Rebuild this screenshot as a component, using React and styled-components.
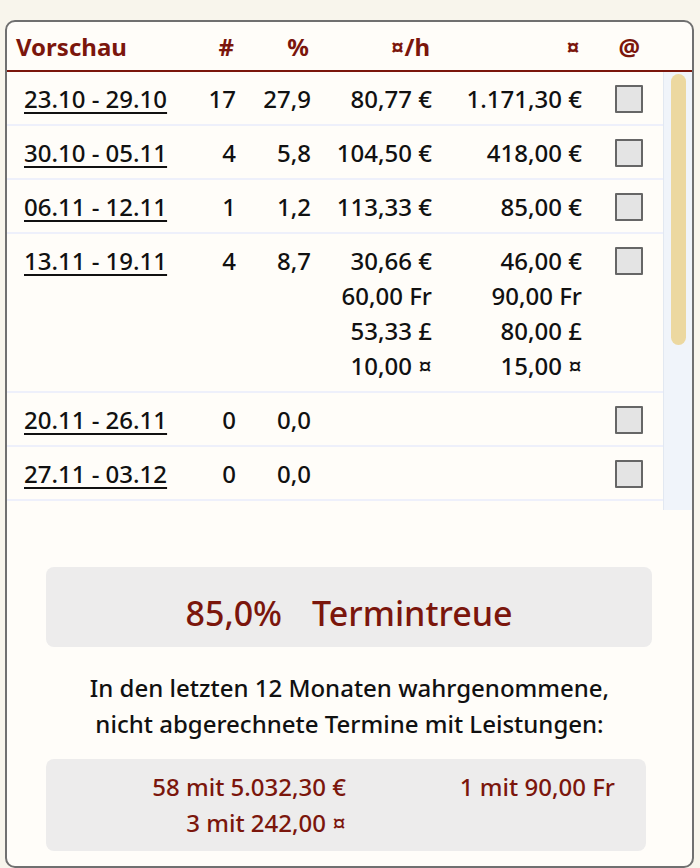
import React from 'react';
import styled, { createGlobalStyle } from 'styled-components';

const Global = createGlobalStyle`
  html, body { margin: 0; padding: 0; }
  body {
    background: #f8f5ec;
    font-family: "Noto Sans", "Open Sans", sans-serif;
    font-weight: 500;
    color: #111;
  }
`;

const RED = '#7b160c';

const Card = styled.div`
  margin: 20px 6px 0 5px;
  height: 848px;
  box-sizing: border-box;
  border: 2px solid #707070;
  border-radius: 10px;
  background: #fffdf9;
  overflow: hidden;
  display: flex;
  flex-direction: column;
`;

const cols = '164px 56px 75px 121px 150px 62px';

const HeaderRow = styled.div`
  display: grid;
  grid-template-columns: ${cols};
  align-items: center;
  height: 48px;
  padding-left: 9px;
  border-bottom: 2px solid ${RED};
  color: ${RED};
  font-weight: 700;
  font-size: 24px;
`;

const HeadCell = styled.div`
  text-align: ${(p) => p.$align || 'right'};
  padding-right: ${(p) => p.$pr ?? 2}px;
`;

const ListArea = styled.div`
  height: 438px;
  flex: none;
  display: flex;
`;

const List = styled.div`
  flex: 1;
  overflow: hidden;
`;

const ScrollTrack = styled.div`
  width: 29px;
  flex: none;
  box-sizing: border-box;
  background: #f0f4fa;
  border-left: 1px solid #e2e8f1;
  padding: 2px 6px 0 7px;
`;

const ScrollThumb = styled.div`
  height: 271px;
  border-radius: 8px;
  background: #ecd8a0;
`;

const Row = styled.div`
  display: grid;
  grid-template-columns: ${cols};
  align-items: start;
  padding: 9px 0 8px 9px;
  border-bottom: 2px solid #eef0fb;
  font-size: 24px;
  line-height: 35px;
`;

const Cell = styled.div`
  text-align: right;
  white-space: nowrap;
`;

const DateCell = styled.div`
  padding-left: 8px;
`;

const DateLink = styled.a`
  color: #111;
  text-decoration: underline;
  text-decoration-thickness: 1.5px;
  text-underline-offset: 4px;
  cursor: pointer;
`;

const CheckCell = styled.div`
  display: flex;
  justify-content: flex-end;
  align-items: center;
  height: 35px;
  padding-right: 1px;
`;

const Check = styled.input.attrs({ type: 'checkbox' })`
  appearance: none;
  margin: 0;
  width: 28px;
  height: 28px;
  box-sizing: border-box;
  border: 2px solid #666;
  border-radius: 1px;
  background: #e4e4e4;
`;

const Summary = styled.div`
  margin: 57px 40px 0 39px;
  height: 80px;
  box-sizing: border-box;
  padding-top: 22px;
  background: #edecec;
  border-radius: 8px;
  display: flex;
  justify-content: center;
  gap: 30px;
  font-size: 34px;
  line-height: 48px;
  color: ${RED};
`;

const Note = styled.p`
  margin: 23px 0 0;
  text-align: center;
  font-size: 24px;
  line-height: 36px;
  color: #111;
`;

const Totals = styled.div`
  margin: 17px 46px 0 39px;
  height: 92px;
  box-sizing: border-box;
  padding: 10px 31px;
  background: #edecec;
  border-radius: 8px;
  display: grid;
  grid-template-columns: 1fr 1fr;
  font-size: 24px;
  line-height: 36px;
  color: ${RED};
`;

const TotalCol = styled.div`
  text-align: right;
`;

const rows = [
  { range: '23.10 - 29.10', n: '17', p: '27,9', rate: ['80,77 €'], total: ['1.171,30 €'] },
  { range: '30.10 - 05.11', n: '4', p: '5,8', rate: ['104,50 €'], total: ['418,00 €'] },
  { range: '06.11 - 12.11', n: '1', p: '1,2', rate: ['113,33 €'], total: ['85,00 €'] },
  {
    range: '13.11 - 19.11', n: '4', p: '8,7',
    rate: ['30,66 €', '60,00 Fr', '53,33 £', '10,00 ¤'],
    total: ['46,00 €', '90,00 Fr', '80,00 £', '15,00 ¤'],
  },
  { range: '20.11 - 26.11', n: '0', p: '0,0', rate: [], total: [] },
  { range: '27.11 - 03.12', n: '0', p: '0,0', rate: [], total: [] },
];

export default function App() {
  return (
    <>
      <Global />
      <Card>
        <HeaderRow>
          <HeadCell $align="left">Vorschau</HeadCell>
          <HeadCell>#</HeadCell>
          <HeadCell>%</HeadCell>
          <HeadCell>¤/h</HeadCell>
          <HeadCell>¤</HeadCell>
          <HeadCell $pr={4}>@</HeadCell>
        </HeaderRow>
        <ListArea>
          <List>
            {rows.map((r) => (
              <Row key={r.range}>
                <DateCell><DateLink>{r.range}</DateLink></DateCell>
                <Cell>{r.n}</Cell>
                <Cell>{r.p}</Cell>
                <Cell>{r.rate.map((v) => <div key={v}>{v}</div>)}</Cell>
                <Cell>{r.total.map((v) => <div key={v}>{v}</div>)}</Cell>
                <CheckCell><Check /></CheckCell>
              </Row>
            ))}
          </List>
          <ScrollTrack>
            <ScrollThumb />
          </ScrollTrack>
        </ListArea>
        <Summary>
          <span>85,0%</span>
          <span>Termintreue</span>
        </Summary>
        <Note>
          In den letzten 12 Monaten wahrgenommene,<br />
          nicht abgerechnete Termine mit Leistungen:
        </Note>
        <Totals>
          <TotalCol>
            <div>58 mit 5.032,30 €</div>
            <div>3 mit 242,00 ¤</div>
          </TotalCol>
          <TotalCol>
            <div>1 mit 90,00 Fr</div>
          </TotalCol>
        </Totals>
      </Card>
    </>
  );
}
